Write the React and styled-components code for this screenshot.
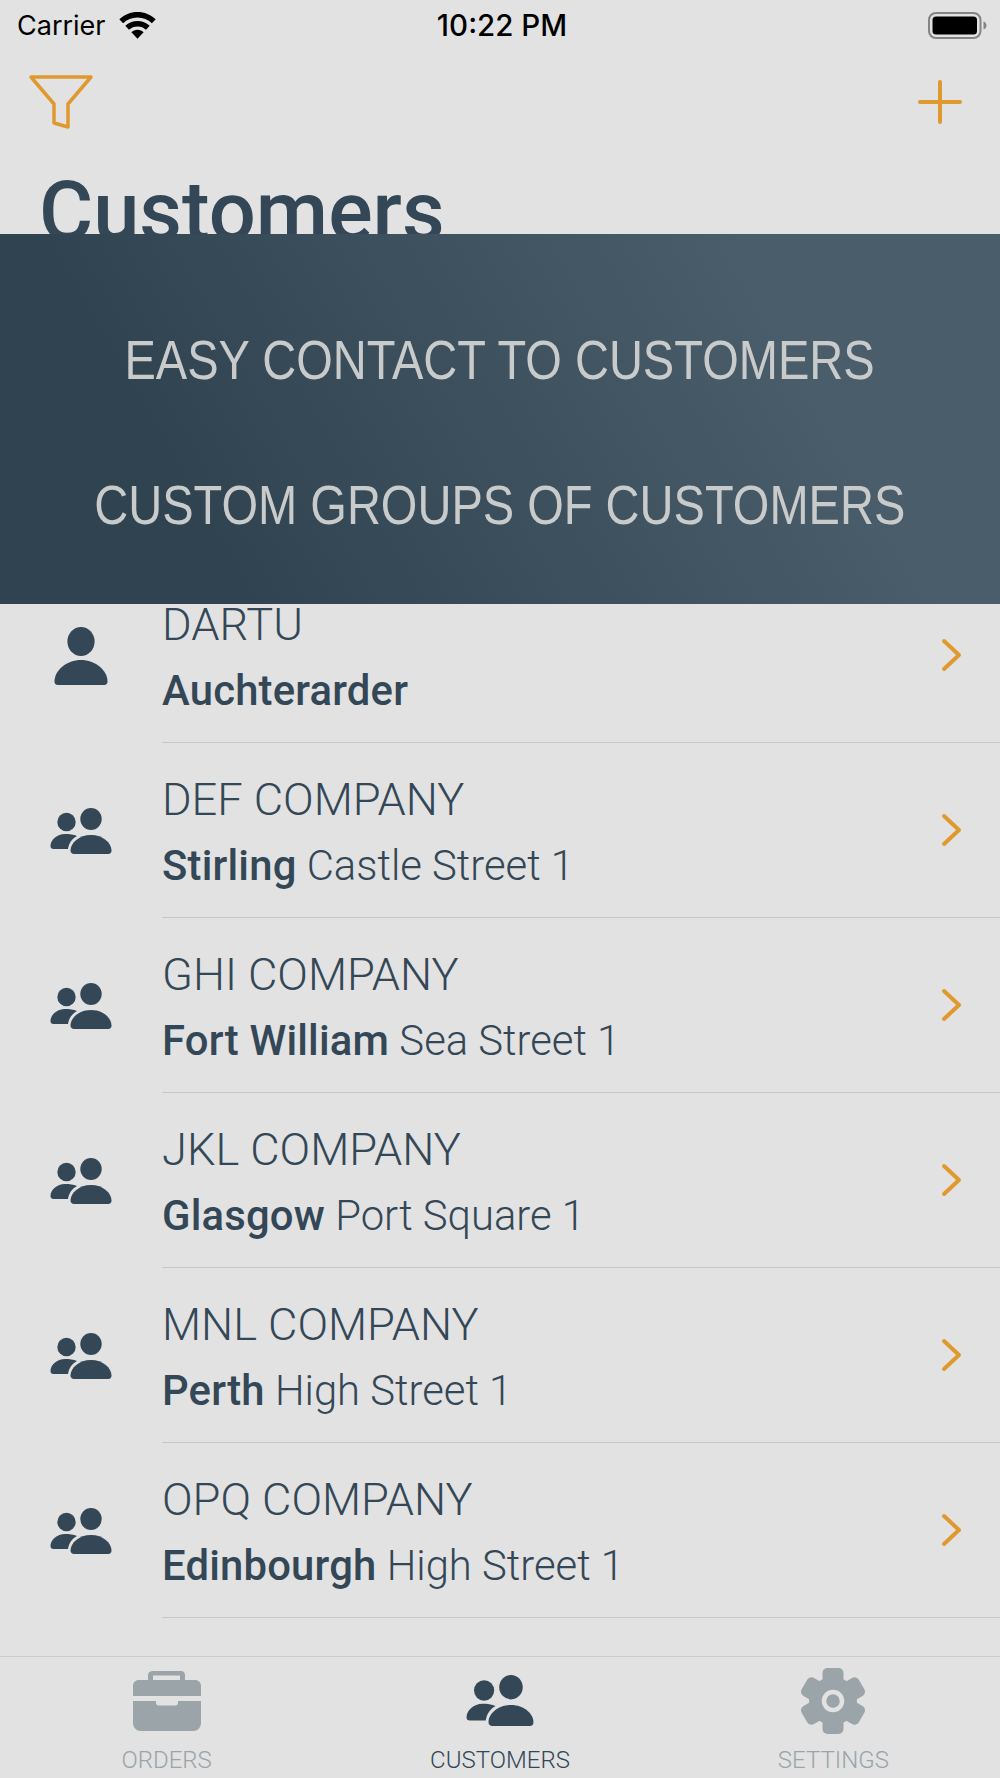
import React from 'react'
import styled, { createGlobalStyle } from 'styled-components'

const ink = '#334756'
const orange = '#e0992e'
const muted = '#9ba4a9'
const plex = '"Roboto", "Noto Sans", sans-serif'

const GlobalStyle = createGlobalStyle`
  html, body {
    margin: 0;
    padding: 0;
    background: #e2e2e2;
  }
`

const Page = styled.div`
  position: relative;
  width: 1000px;
  height: 1778px;
  overflow: hidden;
  background: #e2e2e2;
  font-family: ${plex};
  color: ${ink};
  display: flex;
  flex-direction: column;
`

const StatusBar = styled.div`
  height: 50px;
  padding: 0 13px 0 17px;
  display: grid;
  grid-template-columns: 1fr auto 1fr;
  align-items: center;
  color: #000;
  font-family: "Inter", sans-serif;
  font-size: 27px;
`

const Carrier = styled.div`
  display: flex;
  align-items: center;
  gap: 13px;
`

const Clock = styled.div`
  font-weight: 500;
  font-size: 29.5px;
`

const Battery = styled.div`
  display: flex;
  justify-content: flex-end;
`

const NavBar = styled.div`
  height: 100px;
  padding: 0 38px 0 25px;
  display: flex;
  align-items: flex-start;
  justify-content: space-between;
`

const NavIcon = styled.svg`
  display: block;
  margin-top: ${(p) => p.$top}px;
`

const Title = styled.h1`
  margin: 0;
  height: 418px;
  box-sizing: border-box;
  padding: 22px 0 0 39px;
  font-size: 83px;
  line-height: 80px;
  font-weight: 500;
  color: ${ink};
`

const Banner = styled.div`
  position: absolute;
  left: 0;
  right: 0;
  top: 234px;
  height: 370px;
  box-sizing: border-box;
  padding-top: 26px;
  display: flex;
  flex-direction: column;
  align-items: center;
  justify-content: center;
  gap: 89px;
  background: linear-gradient(60deg, #2f4351 20%, #4a5d6a 78%);
  color: #c9cbcb;
  font-family: "Liberation Sans", sans-serif;
  font-size: 56px;
  line-height: 56px;
`

const BannerLine = styled.div`
  white-space: nowrap;
  transform: scaleX(0.84);
`

const List = styled.div`
  flex: 1;
`

const Row = styled.div`
  height: 175px;
  display: flex;
  align-items: center;
`

const RowIcon = styled.div`
  width: 162px;
  flex: none;
  display: flex;
  justify-content: center;
`

const RowBody = styled.div`
  flex: 1;
  height: 100%;
  box-sizing: border-box;
  padding: 28px 37px 0 0;
  border-bottom: 1px solid #c3c8ca;
  display: flex;
  align-items: center;
  justify-content: space-between;
`

const RowText = styled.div`
  align-self: flex-start;
`

const Name = styled.div`
  font-size: 45.2px;
  line-height: 58px;
  font-weight: 300;
`

const Address = styled.div`
  margin-top: 8px;
  font-size: 41.8px;
  line-height: 58px;
  font-weight: 300;
  white-space: nowrap;

  b {
    font-weight: 500;
    letter-spacing: 0.2px;
  }
`

const Chevron = styled.svg`
  display: block;
  margin-top: -28px;
`

const TabBar = styled.div`
  height: 121px;
  border-top: 1px solid #c9cfd0;
  display: grid;
  grid-template-columns: repeat(3, 1fr);
`

const Tab = styled.div`
  display: flex;
  flex-direction: column;
  align-items: center;
  color: ${(p) => (p.$active ? ink : muted)};
`

const TabIcon = styled.div`
  height: 89px;
  padding-bottom: 2px;
  box-sizing: border-box;
  display: flex;
  align-items: center;
  justify-content: center;
`

const TabLabel = styled.div`
  font-size: 24px;
  line-height: 28px;
  font-weight: 300;
`

const Wifi = () => (
  <svg width="37" height="27" viewBox="0 0 37 27" fill="#000">
    <path d="M18.500 0C11.500 0 5.200 2.700 .3 7.300l3.800 4C8 7.700 13 5.600 18.500 5.600s10.500 2.100 14.400 5.700l3.800-4C31.800 2.700 25.500 0 18.500 0z" />
    <path d="M18.500 9c-4.700 0-8.900 1.800-12.200 4.800l3.700 3.900c2.300-2.100 5.200-3.300 8.500-3.300s6.200 1.200 8.500 3.300l3.700-3.900C27.400 10.800 23.200 9 18.500 9z" />
    <path d="M18.500 17.800c-2.400 0-4.500.9-6.100 2.400l6.100 6.500 6.100-6.500c-1.600-1.500-3.700-2.400-6.100-2.400z" />
  </svg>
)

const BatteryIcon = () => (
  <svg width="59" height="27" viewBox="0 0 59 27">
    <rect x="1" y="1" width="51.500" height="25" rx="7" fill="none" stroke="#848484" strokeWidth="2" />
    <rect x="4.500" y="4.500" width="44.500" height="18" rx="3.500" fill="#000" />
    <path d="M55.500 9.500c1.800.5 3 2.200 3 4s-1.200 3.500-3 4z" fill="#848484" />
  </svg>
)

const FilterIcon = () => (
  <NavIcon $top={24} width="68" height="58" viewBox="0 0 68 58" fill="none" stroke={orange} strokeWidth="3.500" strokeLinejoin="round">
    <path d="M6 3H66L43 30V53L29 49V30Z" />
  </NavIcon>
)

const PlusIcon = () => (
  <NavIcon $top={30} width="44" height="44" viewBox="0 0 44 44" fill="none" stroke={orange} strokeWidth="4" strokeLinecap="round">
    <path d="M22 2V42M2 22H42" />
  </NavIcon>
)

const PersonIcon = () => (
  <svg width="54" height="58" viewBox="0 0 54 58" fill={ink}>
    <ellipse cx="27" cy="14.500" rx="13.600" ry="14.500" />
    <path d="M27 33C13 33 .5 43 .5 54.500 .5 56.500 1.500 58 4 58H50C52.500 58 53.500 56.500 53.500 54.500 53.500 43 41 33 27 33Z" />
  </svg>
)

const GroupIcon = ({ width = 62, height = 46 }) => (
  <svg width={width} height={height} viewBox="0 0 62 46" preserveAspectRatio="none" fill={ink}>
    <ellipse cx="16.500" cy="14" rx="9.200" ry="9.200" />
    <ellipse cx="41" cy="11" rx="10.700" ry="11" />
    <path d="M15 26C7 26 .5 32 .5 38 .5 40 1.500 41 3.500 41H18C19 35.500 21.500 31 27 28 23.500 26.500 19.500 26 15 26Z" />
    <path d="M41 27C29 27 20.500 35 20.500 42.500 20.500 44.800 22 46 24 46H58C60.500 46 61.500 44.800 61.500 42.500 61.500 35 53 27 41 27Z" />
  </svg>
)

const RowChevron = () => (
  <Chevron width="22" height="34" viewBox="0 0 22 34" fill="none" stroke={orange} strokeWidth="4" strokeLinecap="round" strokeLinejoin="round">
    <path d="M3 3L18 17L3 31" />
  </Chevron>
)

const BriefcaseIcon = () => (
  <svg width="68" height="60" viewBox="0 0 68 60" fill={muted}>
    <path fillRule="evenodd" d="M20 0H48C50.500 0 52 1.500 52 4V9H62C65.500 9 68 11.500 68 15V25H0V15C0 11.500 2.500 9 6 9H15V4C15 1.500 17 0 20 0ZM20 4.500V9H47V4.500Z" />
    <path d="M0 30H23V32C23 33.500 24 34.500 25.500 34.500H42.500C44 34.500 45 33.500 45 32V30H68V52C68 56.500 64.500 60 60 60H8C3.500 60 0 56.500 0 52Z" />
  </svg>
)

const GearIcon = () => (
  <svg width="66" height="66" viewBox="0 0 66 66">
    <g fill={muted}>
      <circle cx="33" cy="33" r="24" />
      {[0, 60, 120].map((a) => (
        <rect key={a} x="22.500" y="0" width="21" height="66" rx="5" transform={`rotate(${a} 33 33)`} />
      ))}
    </g>
    <circle cx="33" cy="33" r="9" fill="none" stroke="#e2e2e2" strokeWidth="4.500" />
  </svg>
)

const customers = [
  { name: 'DARTU', city: 'Auchterarder', single: true },
  { name: 'DEF COMPANY', city: 'Stirling', street: 'Castle Street 1' },
  { name: 'GHI COMPANY', city: 'Fort William', street: 'Sea Street 1' },
  { name: 'JKL COMPANY', city: 'Glasgow', street: 'Port Square 1' },
  { name: 'MNL COMPANY', city: 'Perth', street: 'High Street 1' },
  { name: 'OPQ COMPANY', city: 'Edinbourgh', street: 'High Street 1' },
]

export default function App() {
  return (
    <>
      <GlobalStyle />
      <Page>
        <StatusBar>
          <Carrier>
            Carrier
            <Wifi />
          </Carrier>
          <Clock>10:22 PM</Clock>
          <Battery>
            <BatteryIcon />
          </Battery>
        </StatusBar>
        <NavBar>
          <FilterIcon />
          <PlusIcon />
        </NavBar>
        <Title>Customers</Title>
        <Banner>
          <BannerLine>EASY CONTACT TO CUSTOMERS</BannerLine>
          <BannerLine>CUSTOM GROUPS OF CUSTOMERS</BannerLine>
        </Banner>
        <List>
          {customers.map((c) => (
            <Row key={c.name}>
              <RowIcon>{c.single ? <PersonIcon /> : <GroupIcon />}</RowIcon>
              <RowBody>
                <RowText>
                  <Name>{c.name}</Name>
                  <Address>
                    <b>{c.city}</b>
                    {c.street ? ` ${c.street}` : ''}
                  </Address>
                </RowText>
                <RowChevron />
              </RowBody>
            </Row>
          ))}
        </List>
        <TabBar>
          <Tab>
            <TabIcon>
              <BriefcaseIcon />
            </TabIcon>
            <TabLabel>ORDERS</TabLabel>
          </Tab>
          <Tab $active>
            <TabIcon>
              <GroupIcon width={68} height={51} />
            </TabIcon>
            <TabLabel>CUSTOMERS</TabLabel>
          </Tab>
          <Tab>
            <TabIcon>
              <GearIcon />
            </TabIcon>
            <TabLabel>SETTINGS</TabLabel>
          </Tab>
        </TabBar>
      </Page>
    </>
  )
}
